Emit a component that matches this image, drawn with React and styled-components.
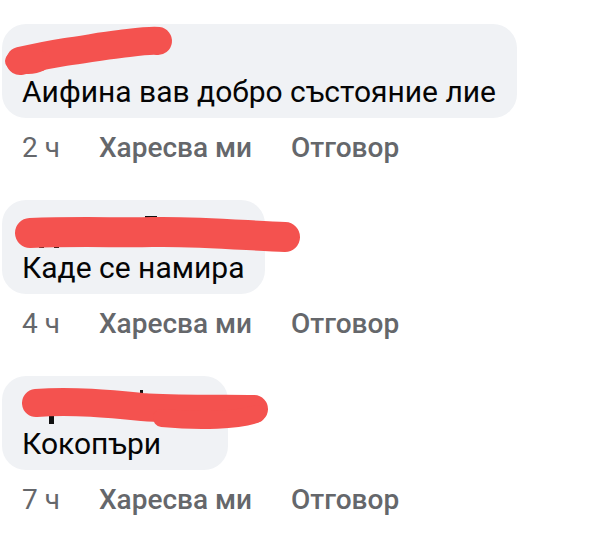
import React from "react";
import styled, { createGlobalStyle } from "styled-components";

const Global = createGlobalStyle`
  html, body { margin: 0; padding: 0; background: #ffffff; }
  body { font-family: Roboto, "Noto Sans", "Liberation Sans", sans-serif; }
`;

const Page = styled.div`
  width: 610px;
  height: 537px;
  overflow: hidden;
  background: #ffffff;
  padding: 24px 0 0 2px;
  box-sizing: border-box;
  display: flex;
  flex-direction: column;
  gap: 37px;
`;

const Comment = styled.div`
  position: relative;
  display: flex;
  flex-direction: column;
  align-items: flex-start;
`;

const Bubble = styled.div`
  background: #f0f2f5;
  border-radius: 24px;
  padding: 10px 21px 8px 20px;
  display: flex;
  flex-direction: column;
`;

const NameLine = styled.div`
  height: 40px;
  width: ${(p) => p.$w || 0}px;
`;

const Text = styled.div`
  font-size: 30px;
  line-height: 36px;
  color: #050505;
  white-space: nowrap;
`;

const Meta = styled.div`
  display: flex;
  align-items: center;
  gap: 39px;
  padding: 15px 0 0 20px;
  font-size: 28px;
  line-height: 30px;
  color: #65676b;
`;

const Time = styled.span`
  font-weight: 400;
`;

const Action = styled.span`
  font-weight: 500;
`;

const Scribble = styled.svg`
  position: absolute;
  left: 0;
  top: 0;
  overflow: visible;
  pointer-events: none;
`;

const RED = "#f4524f";

const scribbles = [
  (
    <Scribble width="200" height="60" key="s1">
      <path d="M18 37 C 35 33, 50 30, 63 28 C 85 25, 100 22, 118 20 C 135 18, 148 16, 156 17" stroke={RED} strokeWidth="28" fill="none" strokeLinecap="round" />
      <ellipse cx="26" cy="37" rx="23" ry="13" fill={RED} />
    </Scribble>
  ),
  (
    <Scribble width="320" height="60" key="s2">
      <rect x="37" y="41" width="5" height="7" fill="#111" />
      <rect x="52" y="41" width="5" height="7" fill="#111" />
      <rect x="143" y="16" width="12" height="4" fill="#111" />
      <path d="M28 33 C 80 31, 120 33, 150 32 C 200 31, 250 36, 283 37" stroke={RED} strokeWidth="30" fill="none" strokeLinecap="round" />
    </Scribble>
  ),
  (
    <Scribble width="300" height="70" key="s3">
      <rect x="47" y="38" width="5" height="10" fill="#111" />
      <rect x="138" y="14" width="3" height="8" fill="#111" />
      <path d="M34 27 C 70 24, 110 28, 140 31 C 180 34, 220 32, 252 33" stroke={RED} strokeWidth="28" fill="none" strokeLinecap="round" />
      <path d="M160 42 C 200 46, 235 44, 254 38" stroke={RED} strokeWidth="18" fill="none" strokeLinecap="round" />
    </Scribble>
  ),
];

const comments = [
  { text: "Аифина вав добро състояние лие", time: "2 ч", nameWidth: 0 },
  { text: "Каде се намира", time: "4 ч", nameWidth: 0 },
  { text: "Кокопъри", time: "7 ч", nameWidth: 185 },
];

export default function App() {
  return (
    <>
      <Global />
      <Page>
        {comments.map((c, i) => (
          <Comment key={i}>
            <Bubble>
              <NameLine $w={c.nameWidth} />
              <Text>{c.text}</Text>
            </Bubble>
            {scribbles[i]}
            <Meta>
              <Time>{c.time}</Time>
              <Action>Харесва ми</Action>
              <Action>Отговор</Action>
            </Meta>
          </Comment>
        ))}
      </Page>
    </>
  );
}
